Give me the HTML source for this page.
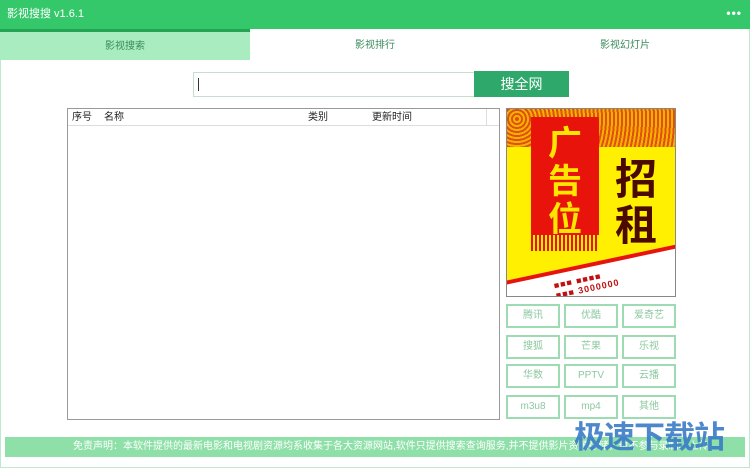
<!DOCTYPE html>
<html><head><meta charset="utf-8"><style>
*{margin:0;padding:0;box-sizing:border-box}
body{width:750px;height:468px;overflow:hidden;background:#fff;font-family:"Liberation Sans","Noto Sans CJK SC",sans-serif;position:relative}
.a{position:absolute}
.title{left:0;top:0;width:750px;height:29px;background:#34c86a;color:#fff;font-size:11px;line-height:29px;padding-left:7px}
.dots{right:8px;top:0;color:#fff;font-size:12px;letter-spacing:1px;line-height:27px;font-weight:bold}
.frame{left:0;top:29px;width:750px;height:439px;border:1px solid #bfe8d0;border-top:none}
.tab{top:29px;height:31px;line-height:33px;text-align:center;font-size:10px;color:#3a8a5a}
.btn{border:2px solid #9ddcb3;color:#8cc8a0;font-size:10px;text-align:center;line-height:20px;width:54px;height:24px}
</style></head><body>
<div class="a title">影视搜搜 v1.6.1</div>
<div class="a dots">•••</div>
<div class="a frame"></div>
<div class="a tab" style="left:0;width:250px;background:#a8ecc0;border-top:3px solid #24a352;line-height:29px">影视搜索</div>
<div class="a tab" style="left:250px;width:250px">影视排行</div>
<div class="a tab" style="left:500px;width:250px">影视幻灯片</div>
<div class="a" style="left:193px;top:72px;width:282px;height:25px;border:1px solid #c8dcd0"><div class="a" style="left:4px;top:5px;width:1px;height:13px;background:#333"></div></div>
<div class="a" style="left:474px;top:71px;width:95px;height:26px;background:#2fa86b;color:#fff;font-size:14px;text-align:center;line-height:26px">搜全网</div>
<div class="a" style="left:67px;top:108px;width:433px;height:312px;border:1px solid #999"></div>
<div class="a" style="left:68px;top:109px;width:431px;height:17px;border-bottom:1px solid #ddd;font-size:10px;color:#222;line-height:17px">
<span class="a" style="left:4px">序号</span><span class="a" style="left:36px">名称</span><span class="a" style="left:240px">类别</span><span class="a" style="left:304px">更新时间</span>
<span class="a" style="left:418px;top:0;width:1px;height:17px;background:#ddd"></span></div>
<div class="a" style="left:506px;top:108px;width:170px;height:189px;background:#ffef00;border:1px solid #888;overflow:hidden">
<div class="a" style="left:0;top:0;width:170px;height:38px;background:repeating-radial-gradient(circle at 10px 10px,#e05010 0 2px,#f6b000 2px 4px)"></div>
<div class="a" style="left:24px;top:8px;width:68px;height:125px;background:#e8140c;color:#ffe600;font-size:34px;font-weight:bold;text-align:center;line-height:38px;padding-top:8px">广<br>告<br>位</div>
<div class="a" style="left:24px;top:126px;width:68px;height:16px;background:repeating-linear-gradient(90deg,#e8140c 0 2px,#ffef00 2px 4px)"></div>
<div class="a" style="left:108px;top:48px;color:#4a0a00;font-size:42px;font-weight:bold;line-height:46px">招<br>租</div>
<div class="a" style="left:-20px;top:152px;width:230px;height:70px;background:#fff;border-top:4px solid #e8140c;transform:rotate(-12deg)">
<div style="color:#c01010;font-size:9px;font-weight:bold;padding:6px 0 0 70px;letter-spacing:1px">■■■ ■■■■<br>■■■ 3000000</div></div>
</div>
<div class="a btn" style="left:506px;top:304px">腾讯</div>
<div class="a btn" style="left:564px;top:304px">优酷</div>
<div class="a btn" style="left:622px;top:304px">爱奇艺</div>
<div class="a btn" style="left:506px;top:335px">搜狐</div>
<div class="a btn" style="left:564px;top:335px">芒果</div>
<div class="a btn" style="left:622px;top:335px">乐视</div>
<div class="a btn" style="left:506px;top:364px">华数</div>
<div class="a btn" style="left:564px;top:364px">PPTV</div>
<div class="a btn" style="left:622px;top:364px">云播</div>
<div class="a btn" style="left:506px;top:395px">m3u8</div>
<div class="a btn" style="left:564px;top:395px">mp4</div>
<div class="a btn" style="left:622px;top:395px">其他</div>
<div class="a" style="left:5px;top:437px;width:740px;height:20px;background:#8ee0a8;color:#fff;font-size:10px;line-height:20px;padding-left:68px;white-space:nowrap;overflow:hidden">免责声明：本软件提供的最新电影和电视剧资源均系收集于各大资源网站,软件只提供搜索查询服务,并不提供影片资源存储，也不参与录制、上传。</div>
<div class="a" style="left:574px;top:418px;color:#3a7cc8;font-size:31px;font-weight:bold;line-height:40px;letter-spacing:-1px;opacity:.9">极速下载站</div>
</body></html>
